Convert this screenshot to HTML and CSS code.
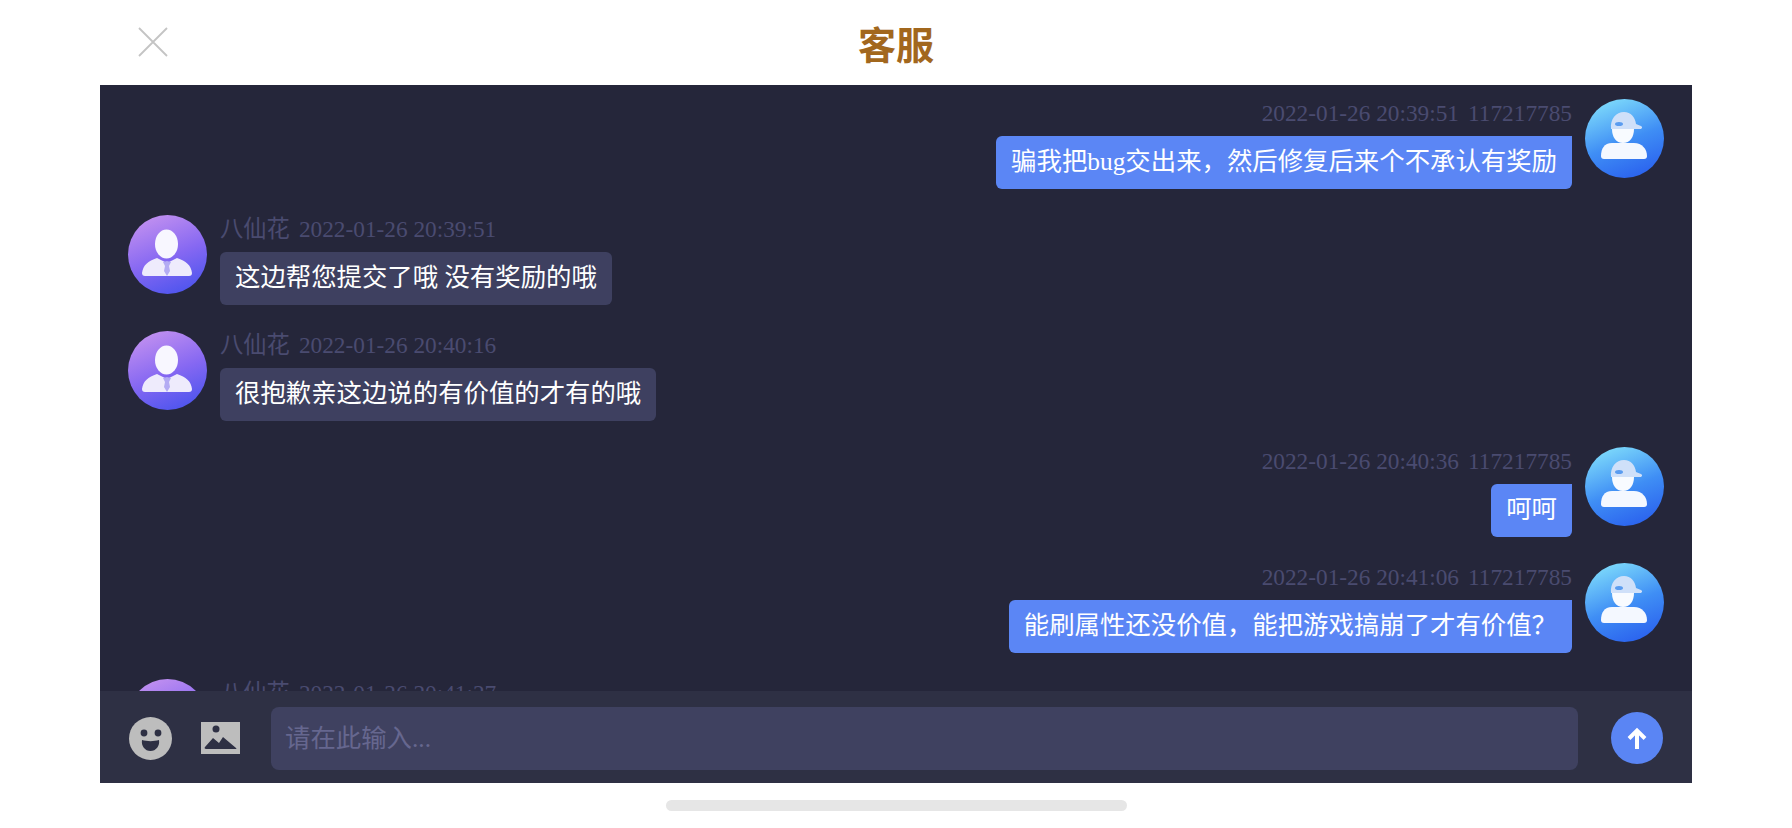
FILE: index.html
```html
<!DOCTYPE html>
<html lang="zh-CN">
<head>
    <meta charset="UTF-8">
    <meta name="viewport" content="width=device-width, initial-scale=1.0">
    <title>客服</title>
    <link rel="stylesheet" href="styles.css">
</head>
<body>
    <svg class="defs" width="0" height="0">
        <defs>
            <linearGradient id="gradUser" x1="0.25" y1="0" x2="0.65" y2="1">
                <stop offset="0" stop-color="#7fdcfb"/>
                <stop offset="0.55" stop-color="#3f8ef5"/>
                <stop offset="1" stop-color="#2b63ee"/>
            </linearGradient>
            <linearGradient id="gradAgent" x1="0.25" y1="0" x2="0.65" y2="1">
                <stop offset="0" stop-color="#c391f0"/>
                <stop offset="0.55" stop-color="#8668f2"/>
                <stop offset="1" stop-color="#4f55ee"/>
            </linearGradient>
            <symbol id="userAvatar" viewBox="0 0 79 79">
                <circle cx="39.5" cy="39.5" r="39.5" fill="url(#gradUser)"/>
                <path d="M26 30c-1-10 5-17 13-17 7 0 11 5 12 12l5 2c2 1 1 3-1 3z" fill="#cfe0f9"/>
                <ellipse cx="34" cy="25" rx="4" ry="2" fill="#5a9cf0"/>
                <path d="M27 30h22c0 8-4 14-11 14s-11-6-11-14z" fill="#f8fbff"/>
                <path d="M27 44h22c8 0 13 6 13 13 0 2-1 3-3 3H19c-2 0-3-1-3-3 0-7 3-13 11-13z" fill="#f4f8ff"/>
            </symbol>
            <symbol id="agentAvatar" viewBox="0 0 79 79">
                <circle cx="39.5" cy="39.5" r="39.5" fill="url(#gradAgent)"/>
                <ellipse cx="38.5" cy="29" rx="11.5" ry="14.5" fill="#f8f7ff"/>
                <path d="M29 43c-9 3-14 7-15 15 0 2 1 3 3 3h44c2 0 3-1 3-3-1-8-6-12-15-15l-10 5z" fill="#eeebfc"/>
                <path d="M35 47l4-1 4 1-2 4 1 5-3 5-3-5 1-5z" fill="#b3abf3"/>
            </symbol>
        </defs>
    </svg>

    <div class="app">
        <header class="top-bar">
            <button class="close-btn" aria-label="关闭">
                <svg width="32" height="32" viewBox="0 0 32 32">
                    <path d="M2 2l28 28M30 2L2 30" stroke="#c4c4c4" stroke-width="1.8" fill="none"/>
                </svg>
            </button>
            <h1>客服</h1>
        </header>

        <main class="chat">
            <div class="msg-list">
                <div class="msg msg-me">
                    <svg class="avatar"><use href="#userAvatar"/></svg>
                    <div class="msg-body">
                        <div class="meta"><span>2022-01-26 20:39:51</span><span>117217785</span></div>
                        <div class="bubble">骗我把bug交出来，然后修复后来个不承认有奖励</div>
                    </div>
                </div>
                <div class="msg">
                    <svg class="avatar"><use href="#agentAvatar"/></svg>
                    <div class="msg-body">
                        <div class="meta"><span>八仙花</span><span>2022-01-26 20:39:51</span></div>
                        <div class="bubble">这边帮您提交了哦 没有奖励的哦</div>
                    </div>
                </div>
                <div class="msg">
                    <svg class="avatar"><use href="#agentAvatar"/></svg>
                    <div class="msg-body">
                        <div class="meta"><span>八仙花</span><span>2022-01-26 20:40:16</span></div>
                        <div class="bubble">很抱歉亲这边说的有价值的才有的哦</div>
                    </div>
                </div>
                <div class="msg msg-me">
                    <svg class="avatar"><use href="#userAvatar"/></svg>
                    <div class="msg-body">
                        <div class="meta"><span>2022-01-26 20:40:36</span><span>117217785</span></div>
                        <div class="bubble">呵呵</div>
                    </div>
                </div>
                <div class="msg msg-me">
                    <svg class="avatar"><use href="#userAvatar"/></svg>
                    <div class="msg-body">
                        <div class="meta"><span>2022-01-26 20:41:06</span><span>117217785</span></div>
                        <div class="bubble">能刷属性还没价值，能把游戏搞崩了才有价值？</div>
                    </div>
                </div>
                <div class="msg">
                    <svg class="avatar"><use href="#agentAvatar"/></svg>
                    <div class="msg-body">
                        <div class="meta"><span>八仙花</span><span>2022-01-26 20:41:27</span></div>
                    </div>
                </div>
            </div>

            <footer class="input-bar">
                <svg class="icon-emoji" width="43" height="43" viewBox="0 0 43 43">
                    <circle cx="21.5" cy="21.5" r="21.5" fill="#bdbdbd"/>
                    <circle cx="15" cy="16" r="3.4" fill="#2e3044"/>
                    <circle cx="29" cy="16" r="3.4" fill="#2e3044"/>
                    <path d="M13 23c5 1.5 12 1.5 17 0 1 6-3 11-8.5 11S12 29 13 23z" fill="#2e3044"/>
                </svg>
                <svg class="icon-image" width="39" height="32" viewBox="0 0 39 32">
                    <rect width="39" height="32" fill="#bdbdbd"/>
                    <circle cx="15" cy="7" r="3.5" fill="#2e3044"/>
                    <path d="M4 25l8-9 6 5 4-6 13 11c1 1 0 1-1 1H5c-1 0-2-1-1-2z" fill="#2e3044"/>
                </svg>
                <input class="msg-input" type="text" placeholder="请在此输入...">
                <button class="send-btn" aria-label="发送">
                    <svg width="22" height="22" viewBox="0 0 22 22">
                        <path d="M11 22V4M3 11.5L11 3.500l8 8" stroke="#fff" stroke-width="4" fill="none"/>
                    </svg>
                </button>
            </footer>
        </main>

        <div class="home-bar"><span></span></div>
    </div>
</body>
</html>
```

FILE: styles.css
```css
* {
    box-sizing: border-box;
}
html, body {
    margin: 0;
    padding: 0;
    height: 100%;
    overflow: hidden;
    background: #fff;
}
body {
    font-family: "Liberation Serif", "Noto Sans CJK SC", serif;
}
.defs {
    display: block;
    height: 0;
}
.app {
    display: flex;
    flex-direction: column;
    height: 828px;
    padding: 0 100px;
}
.top-bar {
    display: flex;
    align-items: center;
    justify-content: center;
    flex: 0 0 85px;
    position: relative;
}
.top-bar h1 {
    margin: 0;
    font-family: "Noto Sans CJK SC", sans-serif;
    font-size: 38px;
    font-weight: 700;
    line-height: 1;
    color: #a2671d;
}
.close-btn {
    position: absolute;
    left: 37px;
    top: 26px;
    width: 32px;
    height: 32px;
    padding: 0;
    border: none;
    background: none;
}
.chat {
    display: flex;
    flex-direction: column;
    flex: 0 0 698px;
    min-height: 0;
    background: #25263a;
}
.msg-list {
    flex: 1;
    min-height: 0;
    overflow: hidden;
    padding: 14px 28px 0;
}
.msg {
    display: flex;
    gap: 13px;
    height: 116px;
}
.msg-me {
    flex-direction: row-reverse;
}
.avatar {
    flex: 0 0 79px;
    width: 79px;
    height: 79px;
}
.msg-body {
    display: flex;
    flex-direction: column;
    align-items: flex-start;
}
.msg-me .msg-body {
    align-items: flex-end;
}
.meta {
    display: flex;
    gap: 9px;
    height: 37px;
    font-size: 23.3px;
    line-height: 28px;
    color: #4a4b70;
}
.bubble {
    padding: 0 15px;
    height: 53px;
    border-radius: 6px;
    background: #3e4060;
    font-size: 25.4px;
    line-height: 50px;
    white-space: nowrap;
    color: #fff;
}
.msg-me .bubble {
    background: #5b86f5;
    border-top-right-radius: 0;
}
.input-bar {
    display: flex;
    align-items: center;
    flex: 0 0 92px;
    padding: 2px 29px 0;
    background: #2e3044;
}
.icon-emoji {
    flex: none;
    margin-right: 29px;
}
.icon-image {
    flex: none;
    margin-right: 31px;
}
.msg-input {
    flex: 1;
    min-width: 0;
    height: 63px;
    padding: 1px 14px 0;
    border: none;
    border-radius: 8px;
    background: #3f4160;
    font-family: "Liberation Serif", "Noto Sans CJK SC", serif;
    font-size: 25.4px;
    color: #fff;
}
.msg-input::placeholder {
    color: #66678f;
    opacity: 1;
}
.send-btn {
    display: flex;
    align-items: center;
    justify-content: center;
    flex: none;
    width: 52px;
    height: 52px;
    margin-left: 33px;
    padding: 0;
    border: none;
    border-radius: 50%;
    background: #5a85f4;
}
.home-bar {
    display: flex;
    justify-content: center;
    padding-top: 17px;
}
.home-bar span {
    width: 461px;
    height: 11px;
    border-radius: 6px;
    background: #e6e6e6;
}
```
